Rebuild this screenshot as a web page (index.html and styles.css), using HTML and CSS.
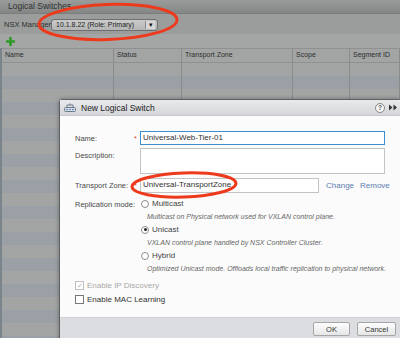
FILE: index.html
```html
<!DOCTYPE html>
<html lang="en">
<head>
    <meta charset="UTF-8">
    <title>Logical Switches</title>
    <link rel="stylesheet" href="styles.css">
</head>
<body>
    <div class="screen">
        <div class="view-title">Logical Switches</div>
        <div class="manager-bar">
            <span class="manager-label">NSX Manager:</span>
            <div class="select">
                <span class="select-text">10.1.8.22 (Role: Primary)</span>
                <span class="select-btn">&#9662;</span>
            </div>
        </div>
        <div class="toolbar">
            <svg class="add-icon" width="9" height="9" viewBox="0 0 9 9"><path d="M3.2 0h2.6v3.2H9v2.6H5.8V9H3.2V5.8H0V3.2h3.2z" fill="#2f9a2a"/></svg>
        </div>
        <div class="grid">
            <div class="grid-row grid-head">
                <div class="cell">Name</div>
                <div class="cell">Status</div>
                <div class="cell">Transport Zone</div>
                <div class="cell">Scope</div>
                <div class="cell">Segment ID</div>
            </div>
            <div class="grid-row"><div class="cell"></div><div class="cell"></div><div class="cell"></div><div class="cell"></div><div class="cell"></div></div>
            <div class="grid-row alt"><div class="cell"></div><div class="cell"></div><div class="cell"></div><div class="cell"></div><div class="cell"></div></div>
            <div class="grid-row"><div class="cell"></div><div class="cell"></div><div class="cell"></div><div class="cell"></div><div class="cell"></div></div>
            <div class="grid-row alt"><div class="cell"></div><div class="cell"></div><div class="cell"></div><div class="cell"></div><div class="cell"></div></div>
            <div class="grid-row"><div class="cell"></div><div class="cell"></div><div class="cell"></div><div class="cell"></div><div class="cell"></div></div>
            <div class="grid-row alt"><div class="cell"></div><div class="cell"></div><div class="cell"></div><div class="cell"></div><div class="cell"></div></div>
            <div class="grid-row"><div class="cell"></div><div class="cell"></div><div class="cell"></div><div class="cell"></div><div class="cell"></div></div>
            <div class="grid-row alt"><div class="cell"></div><div class="cell"></div><div class="cell"></div><div class="cell"></div><div class="cell"></div></div>
            <div class="grid-row"><div class="cell"></div><div class="cell"></div><div class="cell"></div><div class="cell"></div><div class="cell"></div></div>
            <div class="grid-row alt"><div class="cell"></div><div class="cell"></div><div class="cell"></div><div class="cell"></div><div class="cell"></div></div>
            <div class="grid-row"><div class="cell"></div><div class="cell"></div><div class="cell"></div><div class="cell"></div><div class="cell"></div></div>
            <div class="grid-row alt"><div class="cell"></div><div class="cell"></div><div class="cell"></div><div class="cell"></div><div class="cell"></div></div>
            <div class="grid-row"><div class="cell"></div><div class="cell"></div><div class="cell"></div><div class="cell"></div><div class="cell"></div></div>
            <div class="grid-row alt"><div class="cell"></div><div class="cell"></div><div class="cell"></div><div class="cell"></div><div class="cell"></div></div>
            <div class="grid-row"><div class="cell"></div><div class="cell"></div><div class="cell"></div><div class="cell"></div><div class="cell"></div></div>
            <div class="grid-row alt"><div class="cell"></div><div class="cell"></div><div class="cell"></div><div class="cell"></div><div class="cell"></div></div>
            <div class="grid-row"><div class="cell"></div><div class="cell"></div><div class="cell"></div><div class="cell"></div><div class="cell"></div></div>
            <div class="grid-row alt"><div class="cell"></div><div class="cell"></div><div class="cell"></div><div class="cell"></div><div class="cell"></div></div>
            <div class="grid-row"><div class="cell"></div><div class="cell"></div><div class="cell"></div><div class="cell"></div><div class="cell"></div></div>
            <div class="grid-row alt"><div class="cell"></div><div class="cell"></div><div class="cell"></div><div class="cell"></div><div class="cell"></div></div>
            <div class="grid-row"><div class="cell"></div><div class="cell"></div><div class="cell"></div><div class="cell"></div><div class="cell"></div></div>
            <div class="grid-row alt"><div class="cell"></div><div class="cell"></div><div class="cell"></div><div class="cell"></div><div class="cell"></div></div>
        </div>
    </div>

    <div class="dialog">
        <div class="dialog-title">
            <svg class="dialog-icon" width="12" height="10" viewBox="0 0 12 10">
                <rect x="0.5" y="4.5" width="11" height="4" rx="1" fill="#d9dde3" stroke="#6d7a8a"/>
                <path d="M3 4V2h6v2M6 2V0.5" stroke="#6d7a8a" fill="none"/>
                <circle cx="3" cy="6.5" r="0.8" fill="#3a78c2"/>
                <circle cx="6" cy="6.5" r="0.8" fill="#3a78c2"/>
                <circle cx="9" cy="6.5" r="0.8" fill="#3a78c2"/>
            </svg>
            <span class="dialog-name">New Logical Switch</span>
            <span class="help">?</span>
            <svg class="more" width="8" height="7" viewBox="0 0 8 7"><path d="M0 0.5L3.5 3.5L0 6.5zM4.5 0.5L8 3.5L4.5 6.5z" fill="#333"/></svg>
        </div>
        <div class="dialog-body">
            <div class="field">
                <label class="field-label">Name:</label>
                <span class="req">*</span>
                <div class="input focus">Universal-Web-Tier-01</div>
            </div>
            <div class="field top">
                <label class="field-label">Description:</label>
                <span class="req"></span>
                <div class="input area"></div>
            </div>
            <div class="field">
                <label class="field-label">Transport Zone:</label>
                <span class="req">*</span>
                <div class="input zone">Universal-TransportZone</div>
                <a class="link">Change</a>
                <a class="link">Remove</a>
            </div>
            <div class="field top mode">
                <label class="field-label">Replication mode:</label>
                <span class="req"></span>
                <div class="options">
                    <div class="option"><span class="radio"></span>Multicast</div>
                    <div class="option-desc">Multicast on Physical network used for VXLAN control plane.</div>
                    <div class="option"><span class="radio on"></span>Unicast</div>
                    <div class="option-desc">VXLAN control plane handled by NSX Controller Cluster.</div>
                    <div class="option"><span class="radio"></span>Hybrid</div>
                    <div class="option-desc">Optimized Unicast mode. Offloads local traffic replication to physical network.</div>
                </div>
            </div>
            <div class="check disabled"><span class="box">&#10003;</span>Enable IP Discovery</div>
            <div class="check"><span class="box"></span>Enable MAC Learning</div>
        </div>
        <div class="dialog-footer">
            <button class="btn ok">OK</button>
            <button class="btn">Cancel</button>
        </div>
    </div>

    <svg class="marker marker-manager" width="150" height="44" viewBox="0 0 150 44">
        <ellipse cx="75" cy="22" rx="69" ry="17.5" fill="none" stroke="#ee3a1c" stroke-width="3" transform="rotate(-2 75 22)"/>
    </svg>
    <svg class="marker marker-zone" width="116" height="32" viewBox="0 0 116 32">
        <ellipse cx="58" cy="16" rx="52" ry="12" fill="none" stroke="#ee3a1c" stroke-width="3" transform="rotate(-2 58 16)"/>
    </svg>
</body>
</html>
```

FILE: styles.css
```css
body {
    margin: 0;
    width: 400px;
    height: 338px;
    overflow: hidden;
    position: relative;
    font-family: "Liberation Sans", Arial, sans-serif;
    font-size: 8px;
    color: #333;
    white-space: nowrap;
}

.screen {
    height: 338px;
    background-color: #a1a3a2;
}

.view-title {
    height: 13px;
    line-height: 13px;
    padding-left: 8px;
    font-size: 8.5px;
    color: #303232;
    background: linear-gradient(#9a9c9c, #858787);
    border-bottom: 1px solid #7c7e7e;
}

.manager-bar {
    height: 19px;
    display: flex;
    align-items: center;
    padding-left: 4px;
    padding-top: 1px;
    background-color: #9b9d9c;
}

.manager-label {
    width: 47px;
    flex-shrink: 0;
    font-size: 7.5px;
    color: #2c2e2e;
}

.select {
    width: 105px;
    height: 10px;
    flex-shrink: 0;
    display: flex;
    align-items: center;
    border: 1px solid #6e706f;
    border-radius: 3px;
    background: linear-gradient(#cacbca, #b5b6b5);
}

.select-text {
    flex: 1;
    padding-left: 4px;
    font-size: 7px;
    color: #222;
}

.select-btn {
    width: 9px;
    margin-right: 2px;
    height: 8px;
    line-height: 8px;
    text-align: center;
    font-size: 7px;
    color: #111;
    border-left: 1px solid #8a8c8b;
    background-color: #d6d7d6;
}

.toolbar {
    height: 14px;
    display: flex;
    align-items: center;
    padding-left: 6px;
    background-color: #a4a6a5;
}

.grid {
    border-left: 2px solid #7b838b;
}

.grid-row {
    display: grid;
    grid-template-columns: 112px 68px 111px 57px 1fr;
    height: 13px;
    background-color: #a3a5a5;
}

.grid-row.alt {
    background-color: #9aa0a5;
}

.grid-head {
    background-color: #a3a5a4;
    border-top: 1px solid #8f9190;
    border-bottom: 1px solid #8f9190;
    line-height: 12px;
    font-size: 7px;
    color: #2c2e2e;
}

.cell {
    padding-left: 3px;
    border-right: 1px solid #8a8c8b;
}

.dialog {
    position: absolute;
    left: 59px;
    top: 99px;
    width: 340px;
    height: 240px;
    display: flex;
    flex-direction: column;
    background-color: #fbfbfb;
    border: 1px solid #5e6062;
    border-radius: 3px 3px 0 0;
    box-shadow: 0 0 4px rgba(0, 0, 0, 0.35);
}

.dialog-title {
    height: 15px;
    display: flex;
    align-items: center;
    padding-left: 4px;
    background: linear-gradient(#e9eaec, #d5d6d9);
    border-bottom: 1px solid #c8c9cc;
}

.dialog-icon {
    margin-right: 5px;
}

.dialog-name {
    flex: 1;
    font-size: 8.5px;
    color: #222;
}

.help {
    width: 8px;
    height: 8px;
    line-height: 8px;
    border-radius: 50%;
    border: 1px solid #888;
    background-color: #f6f6f6;
    text-align: center;
    font-size: 6.5px;
    font-weight: bold;
    color: #555;
    margin-right: 4px;
}

.more {
    margin-right: 3px;
}

.dialog-body {
    flex: 1;
    padding: 15px 0 0 15px;
}

.field {
    display: flex;
    align-items: center;
    margin-bottom: 3px;
    color: #4a4a4a;
}

.field.top {
    align-items: flex-start;
}

.field-label {
    width: 59px;
    flex-shrink: 0;
    font-size: 7.5px;
}

.field.top .field-label {
    padding-top: 3px;
}

.req {
    width: 6px;
    flex-shrink: 0;
    color: #e03a2a;
    font-size: 7px;
}

.input {
    width: 241px;
    height: 12px;
    line-height: 12px;
    padding-left: 2px;
    background-color: #fff;
    border: 1px solid #c2c4c6;
    color: #333;
}

.input.focus {
    border-color: #3b8fd1;
}

.input.area {
    height: 24px;
    margin-bottom: 1px;
}

.input.zone {
    width: 175px;
    height: 13px;
    margin-right: 7px;
}

.link {
    color: #5b7db0;
    margin-right: 6px;
}

.mode {
    margin-top: 4px;
}

.options {
    color: #444;
}

.option {
    height: 13px;
    display: flex;
    align-items: center;
    padding-left: 1px;
}

.radio {
    width: 6px;
    height: 6px;
    border: 1px solid #8d8f91;
    border-radius: 50%;
    background-color: #fff;
    margin-right: 3px;
    display: flex;
    align-items: center;
    justify-content: center;
}

.radio.on::after {
    content: "";
    width: 3px;
    height: 3px;
    border-radius: 50%;
    background-color: #222;
}

.option-desc {
    height: 13px;
    line-height: 13px;
    padding-left: 7px;
    font-style: italic;
    font-size: 7px;
    color: #666;
}

.check {
    height: 14px;
    display: flex;
    align-items: center;
    color: #333;
}

.check.disabled {
    margin-top: 3px;
    color: #a8a8a8;
}

.box {
    width: 7px;
    height: 7px;
    line-height: 7px;
    border: 1px solid #777;
    background-color: #fff;
    margin-right: 3px;
    font-size: 7px;
    text-align: center;
}

.check.disabled .box {
    border-color: #c0c0c0;
    color: #b0b0b0;
}

.dialog-footer {
    height: 22px;
    display: flex;
    align-items: center;
    padding-left: 253px;
    gap: 7px;
    background-color: #dcdde0;
    border-top: 1px solid #d0d1d4;
}

.btn {
    height: 14px;
    padding: 0;
    font-family: "Liberation Sans", Arial, sans-serif;
    font-size: 7.5px;
    color: #333;
    background: linear-gradient(#fdfdfd, #e6e6e6);
    border: 1px solid #a4a6a8;
    border-radius: 2px;
}

.btn.ok {
    width: 37px;
}

.btn + .btn {
    width: 39px;
}

.marker {
    position: absolute;
}

.marker-manager {
    left: 33px;
    top: 0px;
}

.marker-zone {
    left: 126px;
    top: 169px;
}
```
